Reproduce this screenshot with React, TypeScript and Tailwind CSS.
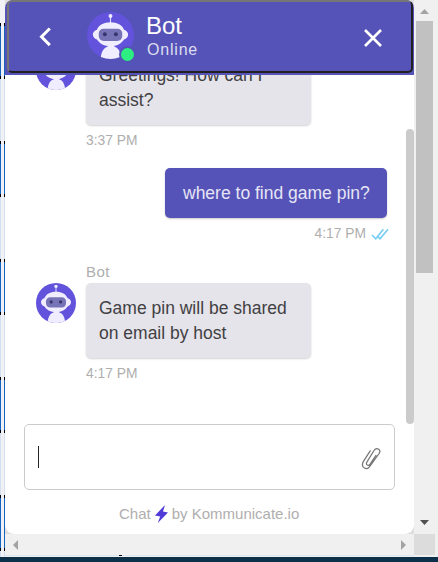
import React from 'react';

const stripes = [0, 1, 2, 3, 4];

function BotAvatar({ className }: { className: string }) {
  return (
    <svg viewBox="0 0 48 48" className={className}>
      <defs>
        <clipPath id="avatarCircle"><circle cx="24" cy="24" r="24" /></clipPath>
      </defs>
      <g clipPath="url(#avatarCircle)">
        <rect width="48" height="48" fill="#6353dc" />
        <path d="M14 49c0-8 3-12.500 7-13.500v-3h7v3c4 1 7 5.500 7 13.500z" fill="#efedff" />
        <path d="M24 4v8" stroke="#dcd9fc" strokeWidth="1.200" />
        <circle cx="24" cy="4" r="2" fill="#efedff" />
        <path d="M24 10.500c7 0 12 3 13.800 7.500 2.700 1 4.200 2.800 4.200 5s-1.500 4.200-4.200 5.200C35 32.500 30.500 35 24 35s-11-2.500-13.800-6.800C7.500 27.200 6 25.200 6 23s1.500-4 4.200-5C12 13.500 17 10.500 24 10.500z" fill="#efedff" />
        <rect x="12" y="17" width="24" height="12.500" rx="5" fill="#7773b7" />
        <circle cx="18.200" cy="22.700" r="2" fill="#38366f" />
        <circle cx="29.500" cy="22.700" r="2" fill="#38366f" />
      </g>
    </svg>
  );
}

function PageStrip() {
  return (
    <div className="flex h-[557px] w-[5px] shrink-0 flex-col overflow-hidden bg-[#f0f0f5] pt-[23px]">
      {stripes.map((n) => (
        <div key={n} className="h-[118px] shrink-0">
          <div className="flex h-[56px] justify-between bg-[#f0f0f5]">
            <span className="w-px border-y-[3px] border-black bg-[#1464c0]" />
            <span className="w-px border-y-[3px] border-black bg-[#1464c0]" />
          </div>
          <div className="h-[62px] border-x border-[#d3e0ef]" />
        </div>
      ))}
    </div>
  );
}

function Header() {
  return (
    <header className="h-[75px] shrink-0 bg-[#5553b7] pr-px pl-[2px]">
      <div className="flex h-[73px] rounded-[5px] border-2 border-t-[#767676] border-r-[#212121] border-b-[#212121] border-l-[#767676]">
        <svg viewBox="0 0 12 20" className="mt-[25px] ml-[30px] h-5 w-3 shrink-0" fill="none" stroke="white" strokeWidth="3">
          <path d="M10.800 1.500 2.500 9.800l8.300 8.300" />
        </svg>
        <div className="relative mt-[10px] ml-[36px] size-12 shrink-0">
          <BotAvatar className="size-[47px]" />
          <span className="absolute top-[34px] left-[32px] size-[17px] rounded-full border-2 border-[#5553b7] bg-[#2cee81]" />
        </div>
        <div className="mt-[10px] ml-[11px] grow text-white">
          <div className="text-[24px] leading-[28px]">Bot</div>
          <div className="pt-px pl-px text-[16px] leading-[18px] tracking-[0.8px] text-[#dedef1]">Online</div>
        </div>
        <svg viewBox="0 0 18 18" className="mt-[27px] mr-[29px] size-[18px] shrink-0" stroke="white" strokeWidth="2.600">
          <path d="m1 1 16 16M17 1 1 17" />
        </svg>
      </div>
    </header>
  );
}

function BotBubble({ lines }: { lines: string[] }) {
  return (
    <div className="flex">
      <BotAvatar className="size-10 shrink-0" />
      <div className="ml-[10px] h-[75px] w-[225px] rounded-[5px] bg-[#e5e4ea] px-[13px] pt-[13px] text-[17.5px] leading-[25px] whitespace-nowrap text-[#414043] shadow-[0_1px_2px_rgba(0,0,0,0.18)]">
        {lines.map((line) => <div key={line}>{line}</div>)}
      </div>
    </div>
  );
}

function Messages() {
  return (
    <div className="flex h-[349px] shrink-0 overflow-hidden">
      <div className="-mt-[25px] flex w-[401px] shrink-0 flex-col pl-[31px] text-[13.8px] text-[#aeaeae]">
        <BotBubble lines={['Greetings! How can I', 'assist?']} />
        <div className="mt-[8px] ml-[50px] h-4 leading-4">3:37 PM</div>
        <div className="mt-[19px] mr-[19px] h-[50px] w-[222px] self-end rounded-[5px] bg-[#5553b7] pl-[18px] text-[17.5px] leading-[50px] whitespace-nowrap text-[#e6e5f5] shadow-[0_1px_2px_rgba(0,0,0,0.22)]">where to find game pin?</div>
        <div className="mt-[8px] mr-[17px] flex h-4 items-center self-end leading-4">
          4:17 PM
          <svg viewBox="0 0 19 12" className="ml-[5px] h-3 w-[18px]" fill="none" stroke="#76cdf5" strokeWidth="1.700">
            <path d="m1 7 4 4 8-10M7.500 9l2 2 8.500-10" />
          </svg>
        </div>
        <div className="mt-[22px] ml-[50px] h-[19px] text-[15px] leading-4 tracking-[0.4px]">Bot</div>
        <BotBubble lines={['Game pin will be shared', 'on email by host']} />
        <div className="mt-[8px] ml-[50px] h-4 leading-4">4:17 PM</div>
      </div>
      <div className="mt-[54px] h-[295px] w-2 rounded-[4px] bg-[#cbcbcb]" />
    </div>
  );
}

function Composer() {
  return (
    <div className="ml-[19px] flex h-[66px] w-[371px] shrink-0 items-center justify-between rounded-[5px] border border-[#cbcbcb] pr-[13px] pl-[13px]">
      <span className="h-[22px] w-px bg-[#252525]" />
      <svg viewBox="0 0 20 22" className="mt-[4px] h-[22px] w-5" fill="none" stroke="#777" strokeWidth="1.250" strokeLinecap="round">
        <path d="M9.200 2.800 2.600 13.200c-1.700 2.800-1.300 5.300.5 6.600 2 1.300 4.300.7 5.900-1.700l9.100-12.600c1.200-1.800.9-3.300-.4-4.200-1.500-1-3.500-.5-4.700 1.200L6 13.800c-.9 1.300-.7 2.600.2 3.200 1 .6 2.100.2 2.900-.9l5.900-8.700" />
      </svg>
    </div>
  );
}

function Branding() {
  return (
    <div className="mt-[14px] ml-[114px] flex h-5 items-center text-[15px] leading-5 whitespace-nowrap text-[#afaeae]">
      <span>Chat</span>
      <svg viewBox="0 0 13 18" className="mx-[4px] h-[18px] w-[13px]" fill="#503bd9">
        <path d="M10 0 0 10.500l5.200 1L2.800 18 13 7.500l-5-1z" />
      </svg>
      <span>by Kommunicate.io</span>
    </div>
  );
}

export default function App() {
  return (
    <div className="h-[562px] w-[438px] overflow-hidden bg-[#0c3049] font-['Liberation_Sans',Arial,sans-serif]">
      <div className="flex h-[557px] bg-[#f0f0f0]">
        <PageStrip />
        <div className="w-[409px] shrink-0">
          <div className="h-[534px] bg-[#dedede]">
            <main className="flex h-[534px] flex-col overflow-hidden rounded-t-[8px] rounded-b-[9px] bg-white">
              <Header />
              <Messages />
              <Composer />
              <Branding />
            </main>
          </div>
          <div className="flex h-[21px] items-center justify-between bg-[#f0f0f0] pr-2 pl-2">
            <svg viewBox="0 0 5 10" className="h-[10px] w-[5px]" fill="#a3a3a3"><path d="M5 0v10L0 5z" /></svg>
            <svg viewBox="0 0 5 10" className="h-[10px] w-[5px]" fill="#a3a3a3"><path d="m0 0 5 5-5 5z" /></svg>
          </div>
          <div className="h-px bg-[#dce6ed]">
            <div className="ml-[114px] h-px w-[3px] bg-black" />
          </div>
        </div>
        <div className="flex w-[21px] flex-col">
          <div className="flex h-[534px] flex-col items-center">
            <svg viewBox="0 0 9 5" className="mt-[9px] h-[5px] w-[9px] shrink-0" fill="#a3a3a3"><path d="M0 5h9L4.500 0z" /></svg>
            <div className="mt-[7px] h-[252px] w-[17px] shrink-0 bg-[#c1c1c1]" />
            <svg viewBox="0 0 9 5" className="mt-auto mb-[9px] h-[5px] w-[9px] shrink-0" fill="#505050"><path d="M0 0h9L4.500 5z" /></svg>
          </div>
          <div className="h-[21px] bg-[#dcdcdc]" />
        </div>
      </div>
    </div>
  );
}
